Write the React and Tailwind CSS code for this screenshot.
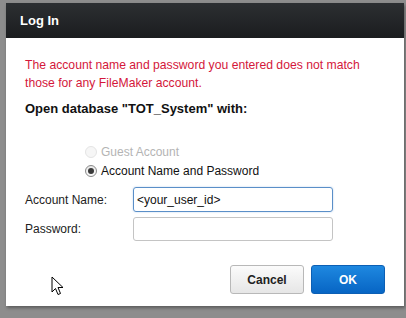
export default function App() {
  return (
    <div className="w-[406px] h-[318px] bg-[#8d8d8d] pl-[6px] pt-[3px] pr-[2px] pb-[12px] overflow-hidden" style={{ fontFamily: '"Liberation Sans", Arial, sans-serif' }}>
      <div className="relative w-full h-full bg-white flex flex-col shadow-[1px_2px_3px_rgba(0,0,0,0.35)]">
        <div className="h-[35px] bg-gradient-to-b from-[#2c2f32] to-[#1b1d1f] flex items-center pl-[14px]">
          <span className="text-white font-bold text-[13px]">Log In</span>
        </div>
        <div className="pl-[19px] pt-[18px] flex flex-col">
          <p className="text-[#d4173b] text-[12.2px] leading-[18px]">
            The account name and password you entered does not match<br />those for any FileMaker account.
          </p>
          <p className="mt-[8px] text-[#111] font-bold text-[13px] leading-[18px]">Open database "TOT_System" with:</p>
          <div className="mt-[26px] pl-[60px] flex flex-col gap-[3px] text-[12px]">
            <div className="flex items-center gap-[4px] h-[16px]">
              <span className="w-[12px] h-[12px] rounded-full border border-[#e4e4e4] bg-[#f6f6f6]" />
              <span className="text-[#b4b4b4]">Guest Account</span>
            </div>
            <div className="flex items-center gap-[4px] h-[16px]">
              <span className="w-[12px] h-[12px] rounded-full border border-[#8a8a8a] bg-gradient-to-b from-[#e8e8e8] to-[#fafafa] flex items-center justify-center">
                <span className="w-[6px] h-[6px] rounded-full bg-[#3a3a3a]" />
              </span>
              <span className="text-[#111]">Account Name and Password</span>
            </div>
          </div>
          <div className="mt-[8px] flex items-center h-[25px] text-[12px] text-[#222]">
            <span className="w-[108px]">Account Name:</span>
            <div className="w-[200px] h-[25px] border border-[#5a8fc8] rounded-[3px] px-[3px] flex items-center text-[12px] text-[#111] shadow-[0_0_2px_rgba(80,140,210,0.4)]">&lt;your_user_id&gt;</div>
          </div>
          <div className="mt-[5px] flex items-center h-[24px] text-[12px] text-[#222]">
            <span className="w-[108px]">Password:</span>
            <div className="w-[200px] h-[24px] border border-[#c4c4c4] rounded-[3px]" />
          </div>
          <div className="mt-[24px] flex justify-end gap-[7px] pr-[19px]">
            <button className="w-[74px] h-[29px] rounded-[3px] border border-[#b8b8b8] bg-gradient-to-b from-[#fbfbfb] to-[#e6e6e6] text-[12px] font-bold text-[#222]">Cancel</button>
            <button className="w-[74px] h-[29px] rounded-[3px] border border-[#0c5fb4] bg-gradient-to-b from-[#1e88e0] to-[#0765c4] text-[12px] font-bold text-white">OK</button>
          </div>
        </div>
        <svg className="absolute left-[45px] top-[273px]" width="14" height="21" viewBox="0 0 14 21">
          <path d="M1 1 L1 16 L4.5 12.5 L7 18.5 L9.5 17.5 L7 11.5 L12 11.5 Z" fill="#fff" stroke="#000" strokeWidth="1" strokeLinejoin="round" />
        </svg>
      </div>
    </div>
  );
}
